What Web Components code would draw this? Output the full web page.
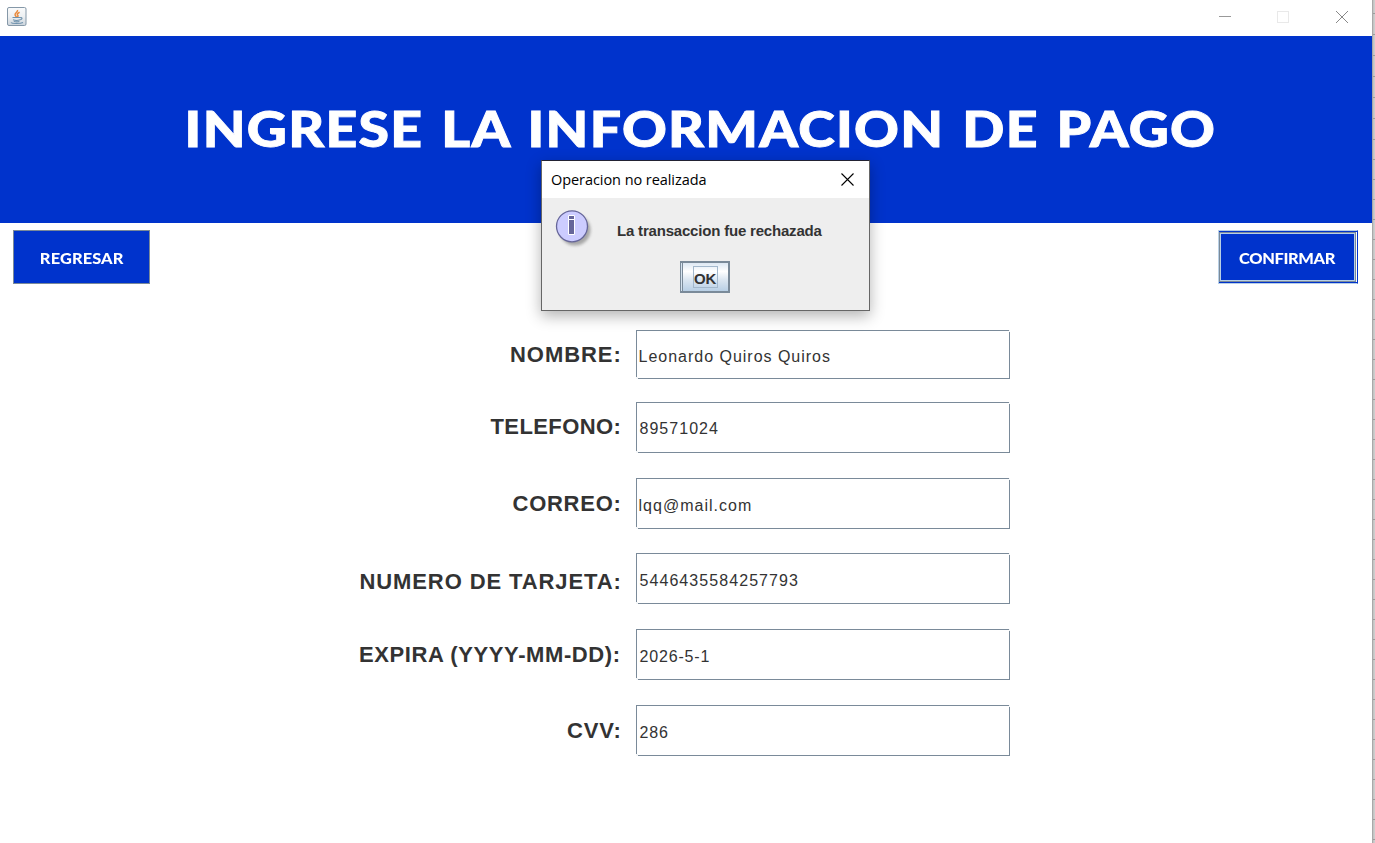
<!DOCTYPE html>
<html lang="es">
<head>
<meta charset="utf-8">
<title>Pago</title>
<style>
html,body{margin:0;height:100%;overflow:hidden;background:#fff}
</style>
</head>
<body>
<payment-app></payment-app>
<script>
const define = (name, html, setup) => {
  const tpl = document.createElement('template');
  tpl.innerHTML = html;
  customElements.define(name, class extends HTMLElement {
    connectedCallback() {
      if (this.shadowRoot) return;
      this.attachShadow({mode: 'open'}).append(tpl.content.cloneNode(true));
      if (setup) setup(this, this.shadowRoot);
    }
  });
};

/* Text tracked so that its ink is exactly `width` pixels wide, with its baseline at `base`.
   `stretch` widens the letters themselves, `word` adds space between words. */
define('tracked-text', `<style>
:host{display:block;white-space:pre;flex:none;line-height:0;box-sizing:border-box;transform-origin:0 0}
</style><slot></slot>`, (el) => {
  const ctx = document.createElement('canvas').getContext('2d');
  const cs = getComputedStyle(el);
  const text = el.textContent;
  const stretch = +(el.getAttribute('stretch') || 1);
  const word = +(el.getAttribute('word') || 0);
  const width = +el.getAttribute('width') / stretch;
  ctx.font = cs.fontWeight + ' ' + cs.fontSize + ' ' + cs.fontFamily;
  const m = ctx.measureText(text);
  const ink = m.actualBoundingBoxLeft + m.actualBoundingBoxRight + word * (text.split(' ').length - 1);
  el.style.width = width + 'px';
  el.style.wordSpacing = word + 'px';
  el.style.letterSpacing = ((width - ink) / (text.length - 1)) + 'px';
  el.style.textIndent = m.actualBoundingBoxLeft + 'px';
  if (stretch !== 1) el.style.transform = 'scaleX(' + stretch + ')';
  const half = (m.fontBoundingBoxAscent - m.fontBoundingBoxDescent) / 2;
  el.style.height = cs.fontSize;
  el.style.paddingTop = (+el.getAttribute('base') + 1 - Math.round(half)) + 'px';
});

define('window-bar', `<style>
:host{display:flex;height:36px;background:#fff;align-items:flex-start;justify-content:space-between}
svg{display:block}.java{margin:6px 0 0 6px}.ctl{margin:10px 23px 0 0}
</style>
<svg class="java" width="22" height="22" viewBox="0 0 22 22">
<defs><linearGradient id="g" x1="0" y1="0" x2="0" y2="1"><stop offset="0" stop-color="#fafbfc"/><stop offset=".5" stop-color="#edf0f2"/><stop offset="1" stop-color="#cbd4dc"/></linearGradient></defs>
<rect x="1.5" y="1.5" width="18.5" height="18" rx="1.5" fill="url(#g)" stroke="#8598a8"/>
<path d="M11.5 4c.8 2-3.2 3-2.4 5 .3.8 1 1.2 1.2 2M13.6 6.2c-2.5 1.2-2.8 2-1.8 3.1.5.6.1 1.3-.6 1.8" fill="none" stroke="#e98a3c" stroke-width="1.5"/>
<path d="M6.5 11.5h8M7 13.8c2 .8 5 .8 7.2 0M7.8 15.4c1.6.5 4 .5 5.6 0M14.5 11.7c2-.6 2.2 1.2-.2 2M5 16.5c1 1.3 9.5 1.3 12 0" fill="none" stroke="#6f92ad" stroke-width="1.1"/>
</svg>
<svg class="ctl" width="130" height="14" viewBox="0 0 130 14" fill="none">
<path d="M0 6.5h12" stroke="#999"/><rect x="58.5" y="1.5" width="11" height="11" stroke="#e9e9e9"/>
<path d="M117 1l12 12M129 1l-12 12" stroke="#888"/></svg>`);

define('page-banner', `<style>
:host{display:block;height:187px;background:#03c;color:#fff;font:900 49px Lato,sans-serif;-webkit-text-stroke:.9px #fff;padding-left:187.5px;box-sizing:border-box}
</style><slot></slot>`);

define('swing-button', `<style>
:host{display:block;width:137px;height:54px;box-sizing:border-box;background:#03c;color:#fff;font:900 14.5px Lato,sans-serif;border:1px solid #7a8a99;padding-left:27px}
:host([focused]){width:140px;border:0;padding:0;background:#fff}
.a,.b,.c{display:contents}
:host([focused]) .a{display:block;box-sizing:border-box;width:140px;height:54px;background:#03c;border:1px solid #b8cfe5;border-right:1px solid #03c}
:host([focused]) .b{display:block;box-sizing:border-box;height:50px;margin:1px 1px 1px 0;border:1px solid #7a8a99;box-shadow:1px 0 #fff}
:host([focused]) .c{display:block;box-sizing:border-box;height:48px;border:1px solid #b8cfe5;padding-left:18px}
</style><div class="a"><div class="b"><div class="c"><slot></slot></div></div></div>`);

define('form-row', `<style>
:host{display:grid;grid-template-columns:619.5px 374px;column-gap:16.5px}
.l{display:flex;justify-content:flex-end;font:bold 22px "Liberation Sans",sans-serif;color:#333}
.f{position:relative;box-sizing:border-box;border:1px solid #7a8a99;padding-left:2px;font:16px "Liberation Sans",sans-serif;color:#333}
.f:before,.f:after{content:"";position:absolute;width:2px;height:2px;background:#f4f6f8}
.f:before{right:-1px;top:-1px;width:1px}.f:after{left:-1px;bottom:-1px}
.t{padding-left:.5px}
</style><div class="l"><slot name="label"></slot></div><div class="f"><div class="t"><slot></slot></div></div>`);

define('info-icon', `<style>:host{display:block}svg{display:block}</style>
<svg width="42" height="44" viewBox="0 0 42 44">
<defs><filter id="s" x="-30%" y="-30%" width="170%" height="170%"><feGaussianBlur stdDeviation="1.8"/></filter></defs>
<circle cx="20" cy="21" r="15.5" fill="#777" opacity=".6" filter="url(#s)"/>
<circle cx="17" cy="17.3" r="15.5" fill="#ccf" stroke="#669" stroke-width="1.3"/>
<path d="M13.5 6.5h6v4h-6zM13.5 10.5h6v15h-6z" fill="#669" stroke="#fff"/></svg>`);

define('message-dialog', `<style>
:host{position:absolute;left:541px;top:160px;width:329px;height:151px;box-sizing:border-box;border:1px solid #666;border-top-color:#223;background:#eee;box-shadow:0 5px 14px rgba(0,0,0,.3)}
header{height:37px;background:#fff;display:flex;justify-content:space-between;color:#000;font:14.5px "Open Sans",sans-serif;padding:0 15px 0 9px}
header svg{margin-top:12px}
.m{display:flex;height:63px;color:#333;font:bold 15px "Liberation Sans",sans-serif}
info-icon{margin:11px 21px 0 13px;width:42px}
.ok{box-sizing:border-box;margin-left:138px;width:50px;height:32px;border:2px solid #7a8a99;border-left:1px solid #7a8a99;box-shadow:inset 1px 0 #d5e3f0,inset 2px 0 #7a8a99;background:linear-gradient(#dde8f3,#fff 30%,#dbe6f1 60%,#b8cfe5);padding:3px 0 0 12px}
.k{box-sizing:border-box;width:25px;height:22px;border:1px solid #a3b8cc;font:bold 15px "Liberation Sans",sans-serif;color:#333}
</style>
<header><tracked-text width="154.5" base="24">Operacion no realizada</tracked-text>
<svg width="13" height="13" viewBox="0 0 13 13"><path d="M.5.5l12 12M12.5.5l-12 12" stroke="#000" stroke-width="1.1"/></svg></header>
<div class="m"><info-icon></info-icon><tracked-text width="204.5" base="38">La transaccion fue rechazada</tracked-text></div>
<div class="ok"><div class="k"><tracked-text width="22.5" base="17">OK</tracked-text></div></div>`);

define('sheet-edge', `<style>
:host{display:block;width:3px;height:843px;background:linear-gradient(#a9a9a9,#a9a9a9) 0 0/1px 100% no-repeat,
repeating-linear-gradient(#9c9c9c 0 1px,transparent 1px 21px) 0 13px/3px 126px no-repeat,
repeating-linear-gradient(#9c9c9c 0 1px,transparent 1px 20px) 0 139px/3px 704px no-repeat,
linear-gradient(90deg,#aaa,#c4c4c4 50%,#d2d2d2)}
</style>`);

define('payment-app', `<style>
:host{display:flex;position:relative;width:1375px;height:843px;overflow:hidden;background:#fff}
main{width:1372px;height:843px}
.bar{display:flex;justify-content:space-between;padding:7px 14px 0 13px;height:100px}
.form{display:grid;grid-template-rows:49px 23px 51px 25px 51px 24px 51px 25px 51px 25px 51px}
form-row:nth-child(1){grid-row:1}form-row:nth-child(2){grid-row:3}form-row:nth-child(3){grid-row:5}
form-row:nth-child(4){grid-row:7}form-row:nth-child(5){grid-row:9}form-row:nth-child(6){grid-row:11}
</style>
<main>
<window-bar></window-bar>
<page-banner><tracked-text width="1028" base="110" stretch="1.13" word="3">INGRESE LA INFORMACION DE PAGO</tracked-text></page-banner>
<div class="bar"><swing-button><tracked-text width="83" base="33" stretch="1.13">REGRESAR</tracked-text></swing-button>
<swing-button focused><tracked-text width="97" base="30" stretch="1.13">CONFIRMAR</tracked-text></swing-button></div>
<div class="form">
<form-row><tracked-text slot="label" width="108.5" base="32">NOMBRE:</tracked-text><tracked-text width="190.5" base="31">Leonardo Quiros Quiros</tracked-text></form-row>
<form-row><tracked-text slot="label" width="129" base="32">TELEFONO:</tracked-text><tracked-text width="78.5" base="31">89571024</tracked-text></form-row>
<form-row><tracked-text slot="label" width="107" base="33">CORREO:</tracked-text><tracked-text width="111.5" base="32">lqq@mail.com</tracked-text></form-row>
<form-row><tracked-text slot="label" width="259" base="36">NUMERO DE TARJETA:</tracked-text><tracked-text width="158.5" base="32">5446435584257793</tracked-text></form-row>
<form-row><tracked-text slot="label" width="259.5" base="33">EXPIRA (YYYY-MM-DD):</tracked-text><tracked-text width="70" base="32">2026-5-1</tracked-text></form-row>
<form-row><tracked-text slot="label" width="52.5" base="33">CVV:</tracked-text><tracked-text width="28.5" base="32">286</tracked-text></form-row>
</div>
</main>
<sheet-edge></sheet-edge>
<message-dialog></message-dialog>`);
</script>
</body>
</html>
